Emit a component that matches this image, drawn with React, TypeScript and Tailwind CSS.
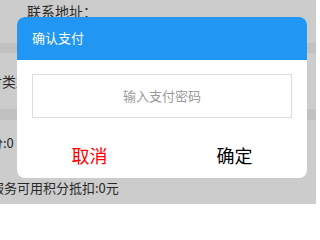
export default function App() {
  const font = { fontFamily: '"Noto Sans CJK SC", "Noto Sans", sans-serif' };

  return (
    <div className="relative w-[316px] h-[204px] overflow-hidden bg-[#f2f2f2] text-[#333]" style={font}>
      {/* page behind the dialog */}
      <div className="h-[43px] bg-white pl-[27px] pt-[1px] text-[14px] leading-[20px]">联系地址：</div>
      <div className="h-[56px] mt-[10px] bg-white flex items-center text-[14px]">
        <span className="ml-[-26px] whitespace-nowrap">支付类型：</span>
      </div>
      <div className="h-[84px] mt-[11px] bg-white flex flex-col text-[13px]">
        <span className="ml-[-49px] mt-[14px] leading-[18px] whitespace-nowrap">可用积分:0</span>
        <span className="ml-[-9px] mt-[27px] leading-[18px] whitespace-nowrap">服务可用积分抵扣:0元</span>
      </div>

      {/* overlay */}
      <div className="absolute inset-0 bg-black/20">
        <div className="ml-[17px] mt-[17px] w-[290px] h-[161px] bg-white rounded-[8px] overflow-hidden flex flex-col">
          <div className="h-[43px] bg-[#2196f3] flex items-center pl-[15px] pb-[2px] text-white text-[13px]">
            确认支付
          </div>
          <div className="px-[15px] pt-[14px]">
            <div className="h-[44px] border border-[#dddddd] flex items-center justify-center text-[13px] text-[#999]">
              输入支付密码
            </div>
          </div>
          <div className="mt-[14px] h-[46px] flex text-[18px]">
            <button className="flex-1 flex items-center justify-center text-[#ff0000]">取消</button>
            <button className="flex-1 flex items-center justify-center text-black">确定</button>
          </div>
        </div>
      </div>
    </div>
  );
}
